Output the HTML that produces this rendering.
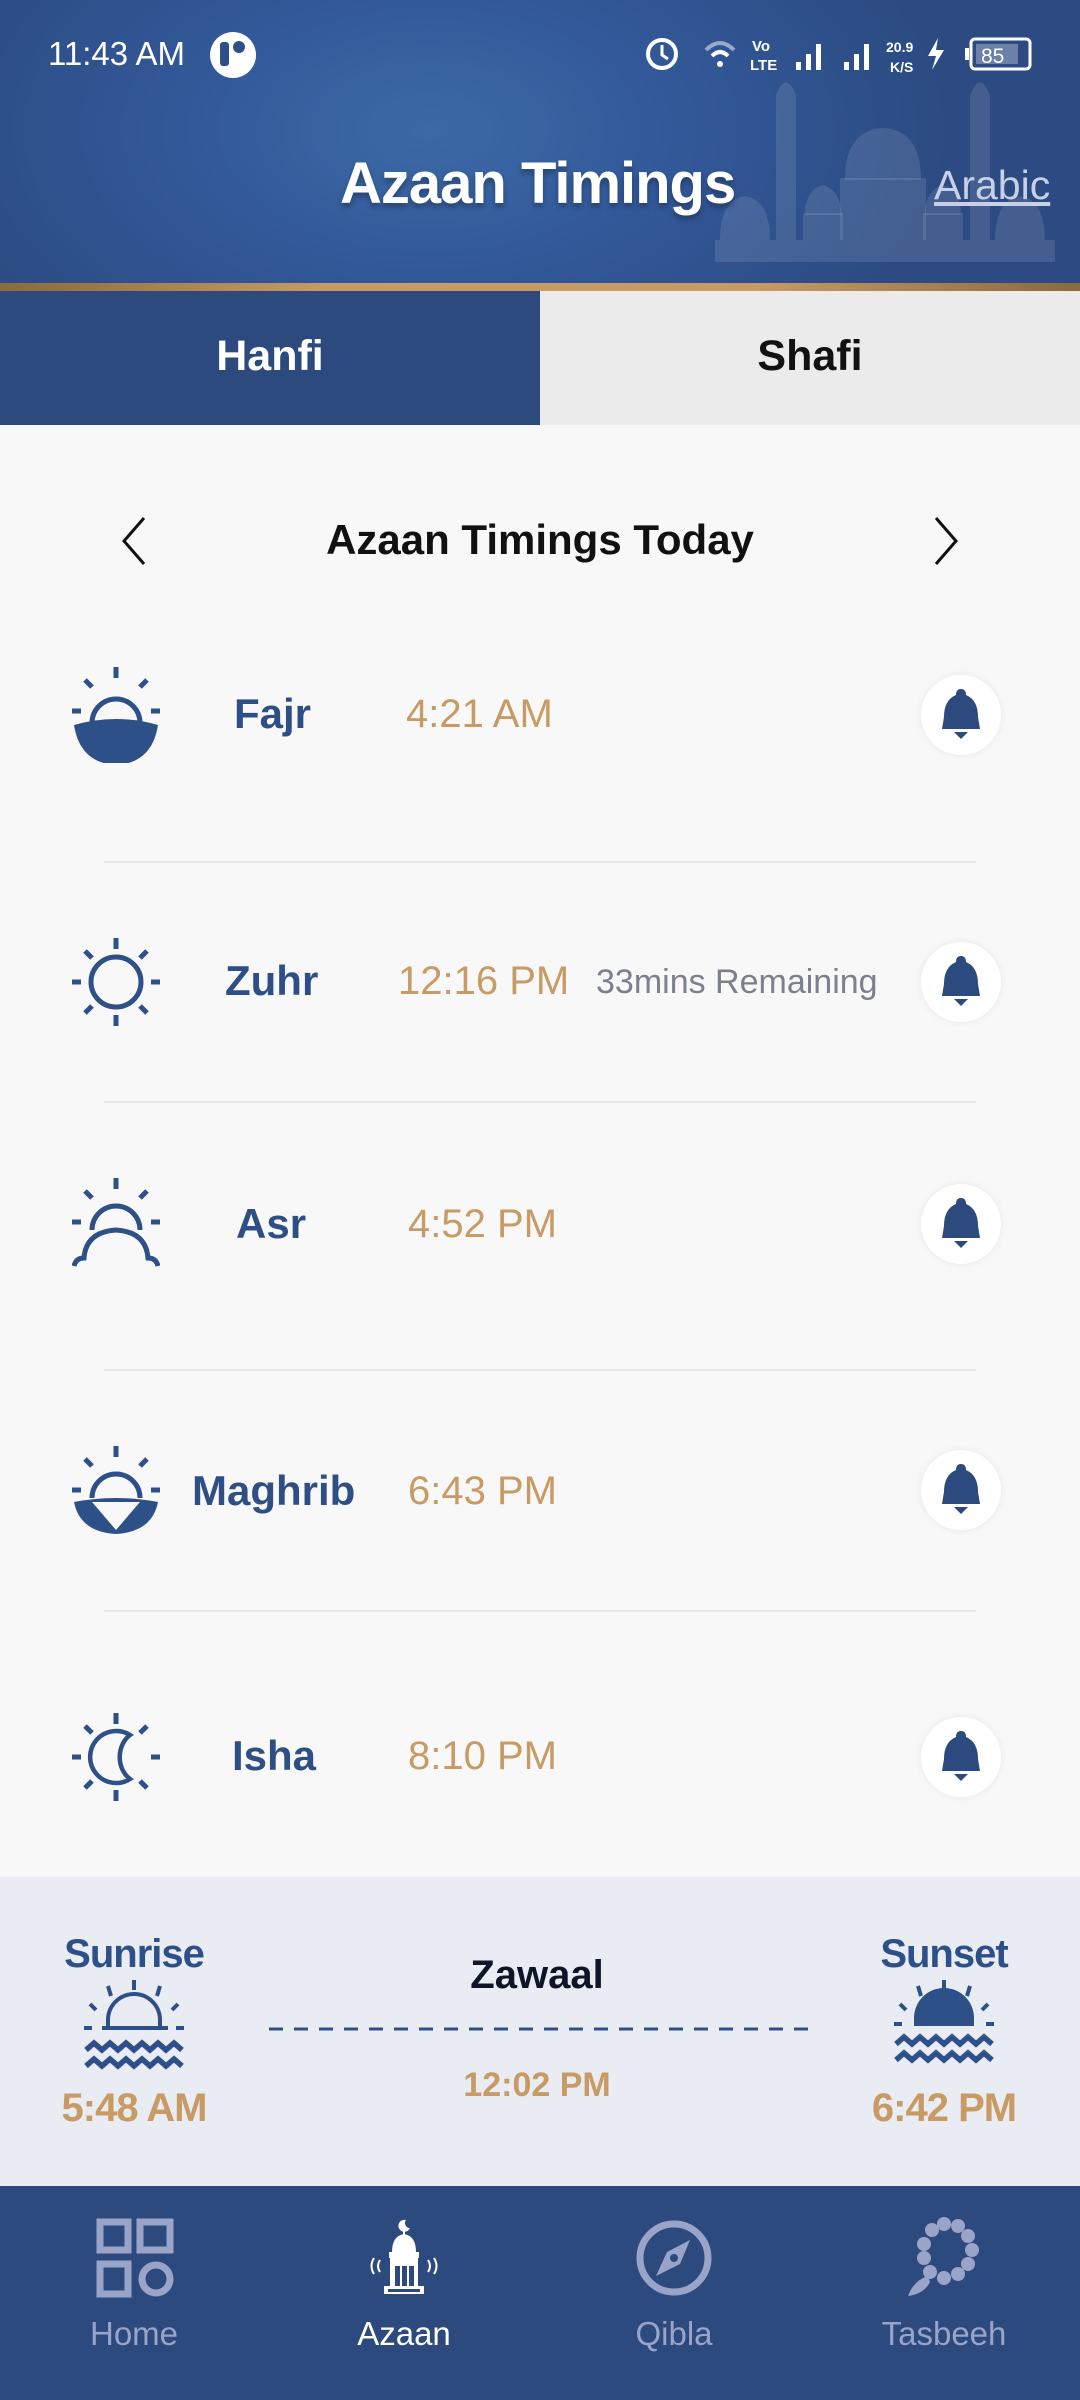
<!DOCTYPE html>
<html><head><meta charset="utf-8"><style>
*{margin:0;padding:0;box-sizing:border-box}
body{width:1080px;height:2400px;position:relative;overflow:hidden;background:#f8f8f8;font-family:"Liberation Sans",sans-serif}
.a{position:absolute}
.hdr{left:0;top:0;width:1080px;height:284px;background:radial-gradient(ellipse 520px 300px at 430px 130px,#3c6aa6 0%,#33599a 45%,#2c4b82 100%)}
.gold{left:0;top:283px;width:1080px;height:8px;background:linear-gradient(90deg,#8a6a3e,#c89a64 30%,#c89a64 70%,#8a6a3e)}
.t{white-space:nowrap}
.nm{color:#2e4f85;font-weight:bold;font-size:42px}
.tm{color:#c89a64;font-size:40px}
.bell{width:80px;height:80px;border-radius:50%;background:#fff;box-shadow:0 0 8px rgba(0,0,0,.07)}
.div{left:104px;width:872px;height:2px;background:#e8e8e8}
.nav{color:#9aa4c8;font-size:33px;text-align:center;width:200px}
</style></head><body>
<div class="a hdr"></div>
<!-- mosque silhouette -->
<svg class="a" style="left:690px;top:60px" width="380" height="210" viewBox="690 60 380 210" fill="#fff" fill-opacity="0.11">
<rect x="715" y="240" width="340" height="22"/>
<rect x="776" y="95" width="20" height="145"/><rect x="970" y="95" width="20" height="145"/>
<path d="M776 95 Q786 70 796 95Z M970 95 Q980 70 990 95Z"/>
<path d="M845 180 Q845 130 883 128 Q921 130 921 180Z"/>
<rect x="840" y="178" width="86" height="62"/>
<path d="M805 215 Q805 190 823 185 Q841 190 841 215Z M925 215 Q925 190 943 185 Q961 190 961 215Z"/>
<rect x="803" y="213" width="40" height="27"/><rect x="923" y="213" width="40" height="27"/>
<path d="M720 240 Q720 200 745 196 Q770 200 770 240Z M995 240 Q995 200 1020 196 Q1045 200 1045 240Z"/>
</svg>
<!-- status bar -->
<div class="a t" style="left:48px;top:35px;color:#fff;font-size:33px">11:43 AM</div>
<div class="a" style="left:210px;top:32px;width:46px;height:46px;border-radius:50%;background:#fff"></div>
<div class="a" style="left:220px;top:42px;width:9px;height:24px;background:#2e5088;border-radius:3px"></div>
<div class="a" style="left:233px;top:41px;width:12px;height:12px;background:#2e5088;border-radius:50%"></div>
<svg class="a" style="left:640px;top:34px" width="400" height="44" viewBox="0 0 400 44" fill="#fff">
<circle cx="22" cy="20" r="14" fill="none" stroke="#fff" stroke-width="4"/><path d="M22 11v10l6 4" stroke="#fff" stroke-width="3" fill="none"/>
<path d="M66 16 Q80 2 94 16" stroke="#fff" stroke-opacity=".5" stroke-width="4" fill="none"/><path d="M72 22 Q80 14 88 22" stroke="#fff" stroke-width="4" fill="none"/><circle cx="80" cy="30" r="3"/>
<text x="112" y="17" font-size="15" font-family="Liberation Sans" font-weight="bold">Vo</text><text x="110" y="36" font-size="15" font-family="Liberation Sans" font-weight="bold">LTE</text>
<rect x="156" y="28" width="5" height="8"/><rect x="166" y="20" width="5" height="16"/><rect x="176" y="10" width="5" height="26"/>
<rect x="204" y="28" width="5" height="8"/><rect x="214" y="20" width="5" height="16"/><rect x="224" y="10" width="5" height="26"/>
<text x="246" y="18" font-size="14" font-family="Liberation Sans" font-weight="bold">20.9</text><text x="250" y="38" font-size="14" font-family="Liberation Sans" font-weight="bold">K/S</text>
<path d="M298 4 L288 22 H296 L292 36 L304 16 H296Z"/>
<rect x="331" y="5" width="59" height="30" rx="4" fill="none" stroke="#fff" stroke-width="3"/><rect x="325" y="14" width="4" height="12"/>
<rect x="336" y="10" width="42" height="20" fill="#fff" fill-opacity=".3"/>
<text x="341" y="29" font-size="21" font-family="Liberation Sans">85</text>
</svg>
<div class="a t" style="left:340px;top:150px;color:#fff;font-weight:bold;font-size:58px;letter-spacing:-1px;text-shadow:0 4px 6px rgba(0,0,0,.3)">Azaan Timings</div>
<div class="a t" style="left:934px;top:162px;color:#c7d0e6;font-size:41px;text-decoration:underline">Arabic</div>
<div class="a gold"></div>
<!-- tabs -->
<div class="a" style="left:0;top:291px;width:540px;height:134px;background:#2c4a7e"></div>
<div class="a" style="left:540px;top:291px;width:540px;height:134px;background:#ebebeb"></div>
<div class="a t" style="left:0;top:332px;width:540px;text-align:center;color:#fff;font-weight:bold;font-size:43px">Hanfi</div>
<div class="a t" style="left:540px;top:332px;width:540px;text-align:center;color:#111;font-weight:bold;font-size:43px">Shafi</div>
<!-- heading -->
<svg class="a" style="left:120px;top:515px" width="30" height="52"><path d="M24 3 L4 26 L24 49" stroke="#111" stroke-width="3" fill="none"/></svg>
<svg class="a" style="left:930px;top:515px" width="30" height="52"><path d="M6 3 L26 26 L6 49" stroke="#111" stroke-width="3" fill="none"/></svg>
<div class="a t" style="left:0;top:516px;width:1080px;text-align:center;color:#111;font-weight:bold;font-size:42px">Azaan Timings Today</div>

<svg width="0" height="0" style="position:absolute"><defs>
<g id="r8" stroke="#2e5088" stroke-width="5"><path d="M0 -44V-33M0 44V33M-44 0H-35M44 0H35M-31 -31L-24 -24M31 -31L24 -24M-31 31L-24 24M31 31L24 24"/></g>
<g id="r5" stroke="#2e5088" stroke-width="5"><path d="M0 -44V-33M-44 0H-35M44 0H35M-31 -31L-24 -24M31 -31L24 -24"/></g>
<g id="bl" fill="#2c4a7e"><path d="M0 -26 Q5 -26 5 -20 Q17 -15 17 2 L19 14 H-19 L-17 2 Q-17 -15 -5 -20 Q-5 -26 0 -26Z"/><path d="M-7 17 H7 L0 24Z"/></g>
</defs></svg>
<!-- Fajr -->
<svg class="a" style="left:72px;top:667px" width="88" height="96" viewBox="-44 -48 88 96"><use href="#r5" transform="translate(0,-4)"/><path d="M-24 8 A24 24 0 0 1 24 8" stroke="#2e5088" stroke-width="5" fill="none"/><path d="M-42 10 Q0 -2 42 10 Q36 48 0 50 Q-36 48 -42 10Z" fill="#2e5088"/></svg>
<div class="a t nm" style="left:234px;top:690px">Fajr</div>
<div class="a t tm" style="left:406px;top:692px">4:21 AM</div>
<div class="a bell" style="left:921px;top:675px"></div>
<div class="a div" style="top:861px"></div>
<!-- Zuhr -->
<svg class="a" style="left:72px;top:938px" width="88" height="88" viewBox="-44 -44 88 88"><use href="#r8"/><circle r="25" stroke="#2e5088" stroke-width="5" fill="none"/></svg>
<div class="a t nm" style="left:225px;top:957px">Zuhr</div>
<div class="a t tm" style="left:398px;top:959px">12:16 PM</div>
<div class="a t" style="left:596px;top:963px;color:#7b808c;font-size:34px">33mins Remaining</div>
<div class="a bell" style="left:921px;top:942px"></div>
<div class="a div" style="top:1101px"></div>
<!-- Asr -->
<svg class="a" style="left:72px;top:1178px" width="88" height="92" viewBox="-44 -44 88 92"><use href="#r5"/><path d="M-24 8 A24 24 0 0 1 24 8" stroke="#2e5088" stroke-width="5" fill="none"/><path d="M-42 44 Q-40 36 -32 36 Q-30 10 0 8 Q30 10 32 36 Q40 36 42 44" stroke="#2e5088" stroke-width="5" fill="none"/></svg>
<div class="a t nm" style="left:236px;top:1200px">Asr</div>
<div class="a t tm" style="left:408px;top:1202px">4:52 PM</div>
<div class="a bell" style="left:921px;top:1184px"></div>
<div class="a div" style="top:1369px"></div>
<!-- Maghrib -->
<svg class="a" style="left:72px;top:1446px" width="88" height="90" viewBox="-44 -44 88 90"><use href="#r5"/><path d="M-24 8 A24 24 0 0 1 24 8" stroke="#2e5088" stroke-width="5" fill="none"/><path d="M-42 12 Q0 4 42 12 Q36 42 0 44 Q-36 42 -42 12Z M-24 12 L0 40 L24 12Z" fill="#2e5088" fill-rule="evenodd"/></svg>
<div class="a t nm" style="left:192px;top:1467px">Maghrib</div>
<div class="a t tm" style="left:408px;top:1469px">6:43 PM</div>
<div class="a bell" style="left:921px;top:1450px"></div>
<div class="a div" style="top:1610px"></div>
<!-- Isha -->
<svg class="a" style="left:72px;top:1713px" width="88" height="88" viewBox="-44 -44 88 88"><use href="#r8"/><path d="M14 -22 A26 26 0 1 0 14 22 A22 26 0 0 1 14 -22Z" stroke="#2e5088" stroke-width="4.5" fill="none"/></svg>
<div class="a t nm" style="left:232px;top:1732px">Isha</div>
<div class="a t tm" style="left:408px;top:1734px">8:10 PM</div>
<div class="a bell" style="left:921px;top:1717px"></div>
<svg class="a" style="left:921px;top:675px" width="80" height="80" viewBox="-40 -40 80 80"><use href="#bl"/></svg>
<svg class="a" style="left:921px;top:942px" width="80" height="80" viewBox="-40 -40 80 80"><use href="#bl"/></svg>
<svg class="a" style="left:921px;top:1184px" width="80" height="80" viewBox="-40 -40 80 80"><use href="#bl"/></svg>
<svg class="a" style="left:921px;top:1450px" width="80" height="80" viewBox="-40 -40 80 80"><use href="#bl"/></svg>
<svg class="a" style="left:921px;top:1717px" width="80" height="80" viewBox="-40 -40 80 80"><use href="#bl"/></svg>

<!-- sun section -->
<div class="a" style="left:0;top:1877px;width:1080px;height:310px;background:#e9ecf3"></div>
<div class="a t" style="left:34px;top:1932px;width:200px;text-align:center;color:#2e5088;font-weight:bold;font-size:40px;letter-spacing:-1px">Sunrise</div>
<div class="a t" style="left:844px;top:1932px;width:200px;text-align:center;color:#2e5088;font-weight:bold;font-size:40px;letter-spacing:-1px">Sunset</div>
<svg class="a" style="left:82px;top:1980px" width="106" height="92" viewBox="0 0 106 92"><g stroke="#2e5088" stroke-width="4" fill="none"><path d="M52 0V10M26 6L29 16M78 6L75 16M8 24L14 30M96 24L90 30M2 48H10M94 48H102M20 48H86"/><path d="M26 48 V40 A26 26 0 0 1 78 40 V48"/></g><g stroke="#2e5088" stroke-width="5.5" fill="none"><path d="M4 70 l8 -7 l8 7 l8 -7 l8 7 l8 -7 l8 7 l8 -7 l8 7 l8 -7 l8 7 l8 -7 l8 7"/><path d="M4 86 l8 -7 l8 7 l8 -7 l8 7 l8 -7 l8 7 l8 -7 l8 7 l8 -7 l8 7 l8 -7 l8 7"/></g></svg>
<svg class="a" style="left:892px;top:1980px" width="106" height="92" viewBox="0 0 106 92"><g stroke="#2e5088" stroke-width="4" fill="none"><path d="M52 0V10M26 6L29 16M78 6L75 16M8 24L14 30M96 24L90 30M2 44H10M94 44H102"/></g><g stroke="#2e5088" stroke-width="5.5" fill="none"><path d="M4 64 l8 -7 l8 7 l8 -7 l8 7 l8 -7 l8 7 l8 -7 l8 7 l8 -7 l8 7 l8 -7 l8 7"/><path d="M4 80 l8 -7 l8 7 l8 -7 l8 7 l8 -7 l8 7 l8 -7 l8 7 l8 -7 l8 7 l8 -7 l8 7"/></g><path d="M22 46 V38 A30 30 0 0 1 82 38 V46Z" fill="#2e5088"/></svg>
<div class="a t" style="left:34px;top:2086px;width:200px;text-align:center;color:#c89a64;font-weight:bold;font-size:40px;letter-spacing:-1px">5:48 AM</div>
<div class="a t" style="left:844px;top:2086px;width:200px;text-align:center;color:#c89a64;font-weight:bold;font-size:40px;letter-spacing:-1px">6:42 PM</div>
<div class="a t" style="left:437px;top:1953px;width:200px;text-align:center;color:#0d1526;font-weight:bold;font-size:40px">Zawaal</div>
<svg class="a" style="left:269px;top:2027px" width="542" height="4"><line x1="0" y1="2" x2="542" y2="2" stroke="#2e5088" stroke-width="3" stroke-dasharray="14 11"/></svg>
<div class="a t" style="left:437px;top:2066px;width:200px;text-align:center;color:#c89a64;font-weight:bold;font-size:34px">12:02 PM</div>

<!-- nav -->
<div class="a" style="left:0;top:2186px;width:1080px;height:214px;background:#2c4a7e"></div>
<svg class="a" style="left:96px;top:2218px" width="80" height="80" viewBox="0 0 80 80"><g stroke="#9aa4c8" stroke-width="7" fill="none"><rect x="4" y="4" width="28" height="28"/><rect x="44" y="4" width="30" height="28"/><rect x="4" y="46" width="28" height="30"/><circle cx="60" cy="61" r="14"/></g></svg>
<svg class="a" style="left:364px;top:2218px" width="80" height="80" viewBox="0 0 80 80" fill="#fff"><path d="M42 2 A6 6 0 1 0 46 10 A5 5 0 0 1 42 2Z"/><rect x="39" y="10" width="2" height="8"/><path d="M28 34 Q28 18 40 16 Q52 18 52 34Z"/><rect x="25" y="34" width="30" height="6"/><rect x="26" y="40" width="28" height="28"/><rect x="20" y="68" width="40" height="8"/><g fill="#2c4a7e"><rect x="31" y="48" width="5" height="20"/><rect x="38" y="48" width="5" height="20"/><rect x="45" y="48" width="5" height="20"/><rect x="24" y="71" width="32" height="3"/></g><path d="M16 42 Q12 48 16 54 M10 40 Q5 48 10 56 M64 42 Q68 48 64 54 M70 40 Q75 48 70 56" stroke="#fff" stroke-width="2" fill="none"/></svg>
<svg class="a" style="left:634px;top:2218px" width="80" height="80" viewBox="0 0 80 80"><circle cx="40" cy="40" r="34" stroke="#9aa4c8" stroke-width="7" fill="none"/><path d="M56 22 L46 46 L22 58 L33 34Z" fill="#9aa4c8"/><circle cx="40" cy="40" r="4" fill="#2c4a7e"/></svg>
<svg class="a" style="left:904px;top:2216px" width="80" height="82" viewBox="0 0 80 82" fill="#9aa4c8"><circle cx="40" cy="8" r="7"/><circle cx="54" cy="10" r="7"/><circle cx="64" cy="20" r="7"/><circle cx="68" cy="34" r="7"/><circle cx="64" cy="48" r="7"/><circle cx="54" cy="58" r="7"/><circle cx="40" cy="62" r="7"/><circle cx="26" cy="56" r="7"/><circle cx="20" cy="42" r="7"/><circle cx="20" cy="28" r="7"/><circle cx="28" cy="14" r="7"/><path d="M24 60 Q10 64 4 80 Q20 78 26 66Z"/></svg>
<div class="a t nav" style="left:34px;top:2315px">Home</div>
<div class="a t nav" style="left:304px;top:2315px;color:#fff">Azaan</div>
<div class="a t nav" style="left:574px;top:2315px">Qibla</div>
<div class="a t nav" style="left:844px;top:2315px">Tasbeeh</div>
</body></html>
